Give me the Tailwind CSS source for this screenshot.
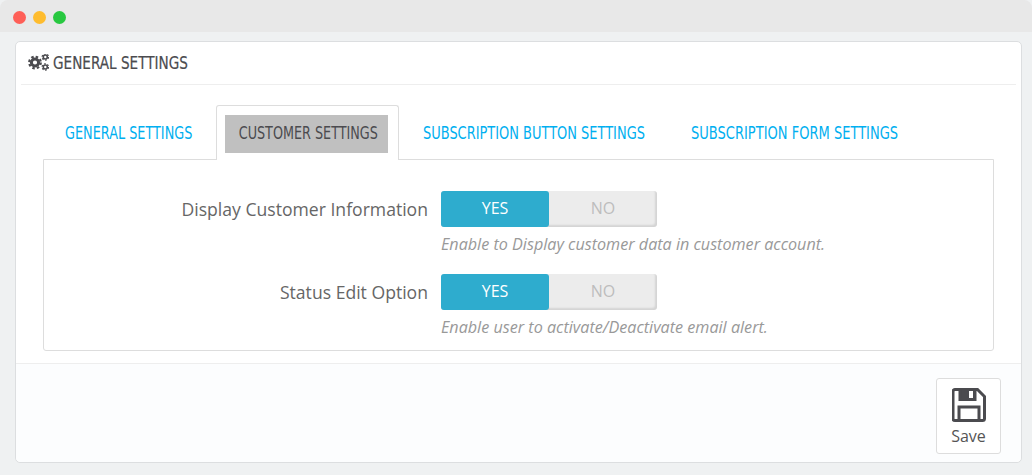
<!DOCTYPE html>
<html lang="en">
<head>
  <meta charset="UTF-8">
  <title>General Settings</title>
  <script src="https://cdn.jsdelivr.net/npm/@tailwindcss/browser@4"></script>
</head>
<body class="w-[1032px] h-[475px] overflow-hidden bg-[#eff1f2] font-['Open_Sans',sans-serif]">

  <!-- Window title bar -->
  <div class="h-8 bg-[#e8e8e8] rounded-t-lg flex items-center gap-[7px] pl-[13px] pt-[2px]">
    <span class="w-[13px] h-[13px] rounded-full bg-[#fe5f57]"></span>
    <span class="w-[13px] h-[13px] rounded-full bg-[#febc2e]"></span>
    <span class="w-[13px] h-[13px] rounded-full bg-[#28c840]"></span>
  </div>

  <!-- Panel -->
  <div class="mt-[9px] mx-[15px] w-[1007px] h-[422px] bg-white border border-[#dcdee0] rounded-[5px] flex flex-col">
    <div class="mx-[5px] h-[43px] border-b border-[#eeeeee] flex items-center gap-[4px] pl-[7px]">
      <svg class="w-[21px] h-[18px] shrink-0" viewBox="0 1 21 18" fill="none" stroke="#4b4b4f">
        <circle cx="7" cy="9.500" r="3.600" stroke-width="3"/>
        <circle cx="7" cy="9.500" r="5.800" stroke-width="2.200" stroke-dasharray="2.500 2.056"/>
        <circle cx="17.300" cy="4" r="2" stroke-width="1.600"/>
        <circle cx="17.300" cy="4" r="3.200" stroke-width="1.200" stroke-dasharray="1.800 1.550"/>
        <circle cx="17.300" cy="14" r="2" stroke-width="1.600"/>
        <circle cx="17.300" cy="14" r="3.200" stroke-width="1.200" stroke-dasharray="1.800 1.550"/>
      </svg>
      <h2 class="font-['Liberation_Sans_Narrow','DejaVu_Sans_Condensed',sans-serif] text-[18px] whitespace-nowrap origin-left scale-x-[0.84] text-[#4b4b4f] uppercase pb-[2px] [-webkit-text-stroke:0.2px_#4b4b4f]">General Settings</h2>
    </div>

    <div class="flex-1 px-[27px] pt-[20px]">
      <!-- Tabs -->
      <ul class="flex h-[55px] font-['Liberation_Sans_Narrow','DejaVu_Sans_Condensed',sans-serif] text-[17px] uppercase text-[#00aff0] whitespace-nowrap relative z-10">
        <li class="w-[173px] flex items-center pl-[22px] pt-[2px]"><span class="origin-left scale-x-[0.84]">General Settings</span></li>
        <li class="w-[183px] h-[55px] bg-white border border-b-0 border-[#dddddd] rounded-t-[3px] pl-[8px] pr-[10px] pt-[9px]">
          <div class="h-[38px] bg-[#c0c0c0] text-[#4b4b4f] flex items-center justify-center pl-[3px]"><span class="scale-x-[0.835]">Customer Settings</span></div>
        </li>
        <li class="w-[268px] flex items-center pl-[24px] pt-[2px]"><span class="origin-left scale-x-[0.848]">Subscription Button Settings</span></li>
        <li class="flex items-center pl-[24px] pt-[2px]"><span class="origin-left scale-x-[0.853]">Subscription Form Settings</span></li>
      </ul>

      <!-- Tab content -->
      <div class="-mt-px h-[192px] border border-[#dddddd] rounded-b-[3px] pt-[31px]">
        <div class="flex h-[83px]">
          <label class="w-[384px] text-right text-[17.6px] leading-[36px] text-[#666666] whitespace-nowrap">Display Customer Information</label>
          <div class="ml-[13px]">
            <div class="w-[216px] h-[36px] flex rounded-[3px] bg-[#ececec] shadow-[inset_-2px_-2px_2px_rgba(0,0,0,0.1)] text-[16px]">
              <span class="w-[108px] bg-[#2eacce] text-white rounded-[3px] flex items-center justify-center pb-[2px]">YES</span>
              <span class="flex-1 text-[#bdbdbd] flex items-center justify-center pb-[2px]">NO</span>
            </div>
            <p class="mt-[7px] text-[16.16px] italic text-[#999999] leading-[20px] whitespace-nowrap">Enable to Display customer data in customer account.</p>
          </div>
        </div>
        <div class="flex">
          <label class="w-[384px] text-right text-[17.6px] leading-[36px] text-[#666666] whitespace-nowrap">Status Edit Option</label>
          <div class="ml-[13px]">
            <div class="w-[216px] h-[36px] flex rounded-[3px] bg-[#ececec] shadow-[inset_-2px_-2px_2px_rgba(0,0,0,0.1)] text-[16px]">
              <span class="w-[108px] bg-[#2eacce] text-white rounded-[3px] flex items-center justify-center pb-[2px]">YES</span>
              <span class="flex-1 text-[#bdbdbd] flex items-center justify-center pb-[2px]">NO</span>
            </div>
            <p class="mt-[7px] text-[16.16px] italic text-[#999999] leading-[20px] whitespace-nowrap">Enable user to activate/Deactivate email alert.</p>
          </div>
        </div>
      </div>
    </div>

    <!-- Footer -->
    <div class="h-[99px] border-t border-[#eeeeee] bg-[#fcfdfe] rounded-b-[5px] flex justify-end pt-[14px] pr-[20px]">
      <button class="w-[65px] h-[76px] bg-white border border-[#dddddd] rounded-[3px] flex flex-col items-center pt-[9px] text-[16px] leading-[24px] text-[#555555]">
        <svg class="w-[34px] h-[34px]" viewBox="0 0 34 34" fill="none" stroke="#4b4b4f" stroke-width="3">
          <path d="M3 1.500h22.500l7 7v22a2 2 0 0 1-2 2H3a2 2 0 0 1-2-2V3.500a2 2 0 0 1 2-2z"/>
          <path d="M8 1.500v10h15v-10" fill="#4b4b4f"/>
          <rect x="17" y="3" width="4" height="7" fill="#fff" stroke="none"/>
          <path d="M7 32V19h20v13"/>
        </svg>
        <span class="mt-[2px]">Save</span>
      </button>
    </div>
  </div>

</body>
</html>
